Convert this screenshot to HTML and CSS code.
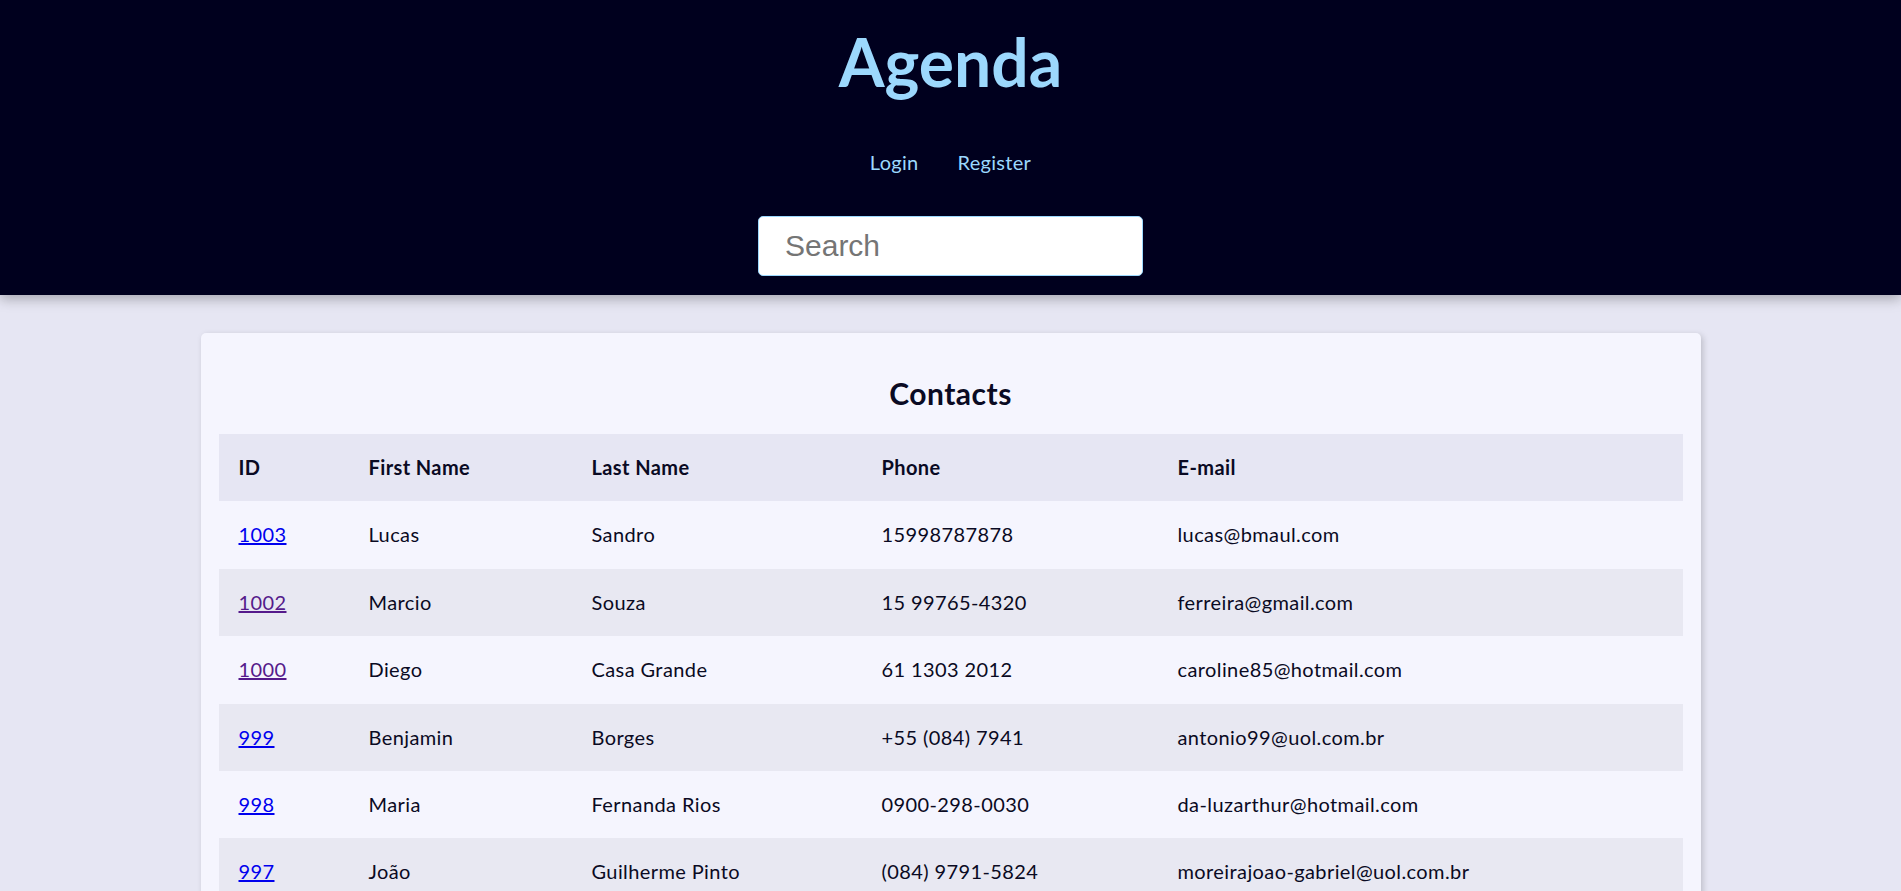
FILE: index.html
```html
<!DOCTYPE html>
<html lang="en">
<head>
<meta charset="utf-8">
<title>Agenda</title>
<link rel="stylesheet" href="styles.css">
</head>
<body>
<header class="site-header">
  <h1 class="brand">Agenda</h1>
  <nav class="nav">
    <a class="nav-link" href="#">Login</a>
    <a class="nav-link" href="#">Register</a>
  </nav>
  <form class="search-form">
    <input class="search-input" type="text" placeholder="Search">
  </form>
</header>
<main class="main">
  <section class="card">
    <h2 class="card-title">Contacts</h2>
    <table class="contacts">
      <colgroup>
        <col class="col-id"><col class="col-first"><col class="col-last"><col class="col-phone"><col class="col-email">
      </colgroup>
      <thead>
        <tr><th>ID</th><th>First Name</th><th>Last Name</th><th>Phone</th><th>E-mail</th></tr>
      </thead>
      <tbody>
        <tr><td><a class="id-link" href="#">1003</a></td><td>Lucas</td><td>Sandro</td><td>15998787878</td><td>lucas@bmaul.com</td></tr>
        <tr><td><a class="id-link visited" href="#">1002</a></td><td>Marcio</td><td>Souza</td><td>15 99765-4320</td><td>ferreira@gmail.com</td></tr>
        <tr><td><a class="id-link visited" href="#">1000</a></td><td>Diego</td><td>Casa Grande</td><td>61 1303 2012</td><td>caroline85@hotmail.com</td></tr>
        <tr><td><a class="id-link" href="#">999</a></td><td>Benjamin</td><td>Borges</td><td>+55 (084) 7941</td><td>antonio99@uol.com.br</td></tr>
        <tr><td><a class="id-link" href="#">998</a></td><td>Maria</td><td>Fernanda Rios</td><td>0900-298-0030</td><td>da-luzarthur@hotmail.com</td></tr>
        <tr><td><a class="id-link" href="#">997</a></td><td>João</td><td>Guilherme Pinto</td><td>(084) 9791-5824</td><td>moreirajoao-gabriel@uol.com.br</td></tr>
      </tbody>
    </table>
  </section>
</main>
</body>
</html>
```
FILE: styles.css
```css
* { box-sizing: border-box; }

html, body {
  margin: 0;
  padding: 0;
}

body {
  background: #e6e6f3;
  color: #0a0a23;
  font-family: Lato, "Noto Sans", sans-serif;
  font-size: 20px;
}

.site-header {
  background: #00001e;
  box-shadow: 0 4px 12px rgba(0, 0, 0, 0.28);
  display: flex;
  flex-direction: column;
  align-items: center;
  padding: 30px 0 19px;
  position: relative;
  z-index: 1;
}

.brand {
  margin: 0;
  font-size: 66px;
  line-height: 64px;
  font-weight: 700;
  color: #9cd8fd;
}

.nav {
  display: flex;
  gap: 39px;
  margin-top: 56px;
  line-height: 24px;
}

.nav-link {
  color: #9cd8fd;
  text-decoration: none;
  font-size: 20px;
  letter-spacing: 0.3px;
}

.search-form {
  margin: 42px 0 0;
}

.search-input {
  display: block;
  width: 385px;
  height: 60px;
  border: 1px solid #9cd8fd;
  border-radius: 5px;
  background: #fff;
  padding: 0 26px;
  font-family: "Liberation Sans", Arial, sans-serif;
  font-size: 30px;
  color: #222;
  outline: none;
}

.search-input::placeholder {
  color: #757575;
}

.main {
  padding-top: 38px;
}

.card {
  width: 1500px;
  margin: 0 auto;
  background: #f5f5fe;
  border-radius: 5px;
  box-shadow: 2px 2px 6px rgba(0, 0, 0, 0.18);
  padding: 19px 18px;
}

.card-title {
  margin: 24px 0;
  text-align: center;
  font-size: 30px;
  line-height: 34px;
  font-weight: 700;
  letter-spacing: 0.5px;
}

.contacts {
  width: 100%;
  border-collapse: collapse;
  table-layout: fixed;
}

.col-id { width: 130px; }
.col-first { width: 223px; }
.col-last { width: 290px; }
.col-phone { width: 296px; }

.contacts th,
.contacts td {
  text-align: left;
  padding: 22px 20px;
  line-height: 23.4px;
  font-size: 20px;
  letter-spacing: 0.4px;
  white-space: nowrap;
}

.contacts th {
  font-weight: 700;
}

.contacts thead tr {
  background: #e6e6f3;
}

.contacts tbody tr:nth-child(even) {
  background: #e8e8f2;
}

.id-link {
  color: #0000ee;
}

.id-link.visited {
  color: #551a8b;
}
```
